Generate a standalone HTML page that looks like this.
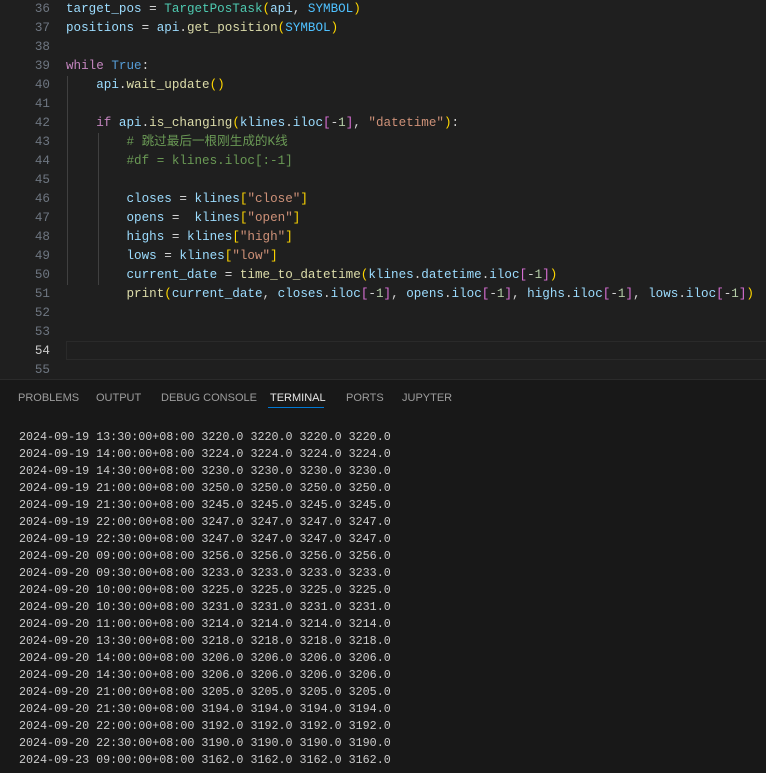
<!DOCTYPE html>
<html style="overflow:hidden;height:773px"><head><meta charset="utf-8"><style>
html,body{margin:0;overflow:hidden}
body{width:766px;height:773px;background:#1f1f1f;font-family:"Liberation Mono",monospace;position:relative}
.ed{position:absolute;left:0;top:0;width:766px;height:379px;background:#1f1f1f;overflow:hidden}
.l{position:absolute;left:0;height:19px;line-height:19px;font-size:12.6px;white-space:pre;color:#cccccc}
.n{position:absolute;left:0;width:50px;text-align:right;color:#6e7681}
.c{position:absolute;left:66px}
.v{color:#9cdcfe}.f{color:#dcdcaa}.k{color:#4ec9b0}.s{color:#4fc1ff}.kw{color:#c586c0}.b{color:#569cd6}.st{color:#ce9178}.cm{color:#6a9955}.nu{color:#b5cea8}.y{color:#ffd700}.p{color:#da70d6}.w{color:#d4d4d4}
.g{position:absolute;width:1px;background:#404040}
.panel{position:absolute;left:0;top:379px;width:766px;height:394px;background:#181818;border-top:1px solid #2b2b2b}
.tab{position:absolute;top:12px;font-family:"Liberation Sans",sans-serif;font-size:11px;color:#9d9d9d}
.t{position:absolute;left:19px;height:17px;line-height:17px;font-size:11.7px;color:#cccccc;white-space:pre}
</style></head><body>
<div class="ed">
<div style="position:absolute;left:66px;top:341px;width:700px;height:17px;border:1px solid #2a2a2a;border-right:none"></div>
<div class="g" style="left:67px;top:76px;height:209px"></div>
<div class="g" style="left:98px;top:133px;height:152px"></div>
<div class="l" style="top:0"><span class="n">36</span><span class="c"><span class="v">target_pos</span><span class="w"> = </span><span class="k">TargetPosTask</span><span class="y">(</span><span class="v">api</span><span class="w">, </span><span class="s">SYMBOL</span><span class="y">)</span></span></div>
<div class="l" style="top:19px"><span class="n">37</span><span class="c"><span class="v">positions</span><span class="w"> = </span><span class="v">api</span><span class="w">.</span><span class="f">get_position</span><span class="y">(</span><span class="s">SYMBOL</span><span class="y">)</span></span></div>
<div class="l" style="top:38px"><span class="n">38</span></div>
<div class="l" style="top:57px"><span class="n">39</span><span class="c"><span class="kw">while</span> <span class="b">True</span><span class="w">:</span></span></div>
<div class="l" style="top:76px"><span class="n">40</span><span class="c">    <span class="v">api</span><span class="w">.</span><span class="f">wait_update</span><span class="y">()</span></span></div>
<div class="l" style="top:95px"><span class="n">41</span></div>
<div class="l" style="top:114px"><span class="n">42</span><span class="c">    <span class="kw">if</span> <span class="v">api</span><span class="w">.</span><span class="f">is_changing</span><span class="y">(</span><span class="v">klines</span><span class="w">.</span><span class="v">iloc</span><span class="p">[</span><span class="w">-</span><span class="nu">1</span><span class="p">]</span><span class="w">, </span><span class="st">"datetime"</span><span class="y">)</span><span class="w">:</span></span></div>
<div class="l" style="top:133px"><span class="n">43</span><span class="c">        <span class="cm"># 跳过最后一根刚生成的K线</span></span></div>
<div class="l" style="top:152px"><span class="n">44</span><span class="c">        <span class="cm">#df = klines.iloc[:-1]</span></span></div>
<div class="l" style="top:171px"><span class="n">45</span></div>
<div class="l" style="top:190px"><span class="n">46</span><span class="c">        <span class="v">closes</span><span class="w"> = </span><span class="v">klines</span><span class="y">[</span><span class="st">"close"</span><span class="y">]</span></span></div>
<div class="l" style="top:209px"><span class="n">47</span><span class="c">        <span class="v">opens</span><span class="w"> =  </span><span class="v">klines</span><span class="y">[</span><span class="st">"open"</span><span class="y">]</span></span></div>
<div class="l" style="top:228px"><span class="n">48</span><span class="c">        <span class="v">highs</span><span class="w"> = </span><span class="v">klines</span><span class="y">[</span><span class="st">"high"</span><span class="y">]</span></span></div>
<div class="l" style="top:247px"><span class="n">49</span><span class="c">        <span class="v">lows</span><span class="w"> = </span><span class="v">klines</span><span class="y">[</span><span class="st">"low"</span><span class="y">]</span></span></div>
<div class="l" style="top:266px"><span class="n">50</span><span class="c">        <span class="v">current_date</span><span class="w"> = </span><span class="f">time_to_datetime</span><span class="y">(</span><span class="v">klines</span><span class="w">.</span><span class="v">datetime</span><span class="w">.</span><span class="v">iloc</span><span class="p">[</span><span class="w">-</span><span class="nu">1</span><span class="p">]</span><span class="y">)</span></span></div>
<div class="l" style="top:285px"><span class="n">51</span><span class="c">        <span class="f">print</span><span class="y">(</span><span class="v">current_date</span><span class="w">, </span><span class="v">closes</span><span class="w">.</span><span class="v">iloc</span><span class="p">[</span><span class="w">-</span><span class="nu">1</span><span class="p">]</span><span class="w">, </span><span class="v">opens</span><span class="w">.</span><span class="v">iloc</span><span class="p">[</span><span class="w">-</span><span class="nu">1</span><span class="p">]</span><span class="w">, </span><span class="v">highs</span><span class="w">.</span><span class="v">iloc</span><span class="p">[</span><span class="w">-</span><span class="nu">1</span><span class="p">]</span><span class="w">, </span><span class="v">lows</span><span class="w">.</span><span class="v">iloc</span><span class="p">[</span><span class="w">-</span><span class="nu">1</span><span class="p">]</span><span class="y">)</span></span></div>
<div class="l" style="top:304px"><span class="n">52</span></div>
<div class="l" style="top:323px"><span class="n">53</span></div>
<div class="l" style="top:342px"><span class="n" style="color:#cccccc">54</span></div>
<div class="l" style="top:361px"><span class="n">55</span></div>
</div>
<div class="panel">
<span class="tab" style="left:18px">PROBLEMS</span>
<span class="tab" style="left:96px">OUTPUT</span>
<span class="tab" style="left:161px">DEBUG CONSOLE</span>
<span class="tab" style="left:270px;color:#e7e7e7">TERMINAL</span>
<div style="position:absolute;left:268px;top:27px;width:56px;height:1px;background:#0078d4"></div>
<span class="tab" style="left:346px">PORTS</span>
<span class="tab" style="left:402px">JUPYTER</span>
</div>
<div class="t" style="top:429px">2024-09-19 13:30:00+08:00 3220.0 3220.0 3220.0 3220.0</div>
<div class="t" style="top:446px">2024-09-19 14:00:00+08:00 3224.0 3224.0 3224.0 3224.0</div>
<div class="t" style="top:463px">2024-09-19 14:30:00+08:00 3230.0 3230.0 3230.0 3230.0</div>
<div class="t" style="top:480px">2024-09-19 21:00:00+08:00 3250.0 3250.0 3250.0 3250.0</div>
<div class="t" style="top:497px">2024-09-19 21:30:00+08:00 3245.0 3245.0 3245.0 3245.0</div>
<div class="t" style="top:514px">2024-09-19 22:00:00+08:00 3247.0 3247.0 3247.0 3247.0</div>
<div class="t" style="top:531px">2024-09-19 22:30:00+08:00 3247.0 3247.0 3247.0 3247.0</div>
<div class="t" style="top:548px">2024-09-20 09:00:00+08:00 3256.0 3256.0 3256.0 3256.0</div>
<div class="t" style="top:565px">2024-09-20 09:30:00+08:00 3233.0 3233.0 3233.0 3233.0</div>
<div class="t" style="top:582px">2024-09-20 10:00:00+08:00 3225.0 3225.0 3225.0 3225.0</div>
<div class="t" style="top:599px">2024-09-20 10:30:00+08:00 3231.0 3231.0 3231.0 3231.0</div>
<div class="t" style="top:616px">2024-09-20 11:00:00+08:00 3214.0 3214.0 3214.0 3214.0</div>
<div class="t" style="top:633px">2024-09-20 13:30:00+08:00 3218.0 3218.0 3218.0 3218.0</div>
<div class="t" style="top:650px">2024-09-20 14:00:00+08:00 3206.0 3206.0 3206.0 3206.0</div>
<div class="t" style="top:667px">2024-09-20 14:30:00+08:00 3206.0 3206.0 3206.0 3206.0</div>
<div class="t" style="top:684px">2024-09-20 21:00:00+08:00 3205.0 3205.0 3205.0 3205.0</div>
<div class="t" style="top:701px">2024-09-20 21:30:00+08:00 3194.0 3194.0 3194.0 3194.0</div>
<div class="t" style="top:718px">2024-09-20 22:00:00+08:00 3192.0 3192.0 3192.0 3192.0</div>
<div class="t" style="top:735px">2024-09-20 22:30:00+08:00 3190.0 3190.0 3190.0 3190.0</div>
<div class="t" style="top:752px">2024-09-23 09:00:00+08:00 3162.0 3162.0 3162.0 3162.0</div>
</body></html>
